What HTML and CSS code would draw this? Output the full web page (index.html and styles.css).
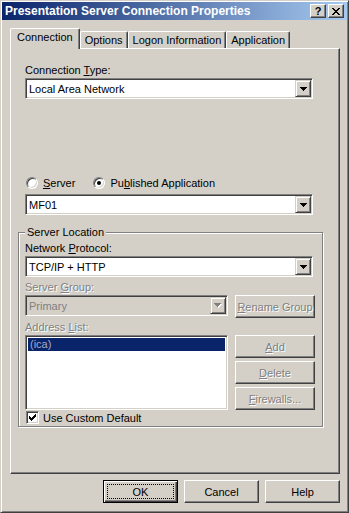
FILE: index.html
```html
<!DOCTYPE html>
<html lang="en">
<head>
    <meta charset="UTF-8">
    <meta name="viewport" content="width=device-width, initial-scale=1.0">
    <title>Presentation Server Connection Properties</title>
    <link rel="stylesheet" href="styles.css">
</head>
<body>
    <div class="window">
        <div class="titlebar">
            <span class="title">Presentation Server Connection Properties</span>
            <div class="caption-btns">
                <span class="cap-btn help">?</span>
                <span class="cap-btn">
                    <svg width="8" height="7" viewBox="0 0 8 7"><path d="M0 0h2v1H0zM6 0h2v1H6zM1 1h2v1H1zM5 1h2v1H5zM2 2h4v1H2zM3 3h2v1H3zM2 4h4v1H2zM1 5h2v1H1zM5 5h2v1H5zM0 6h2v1H0zM6 6h2v1H6z" fill="#000"/></svg>
                </span>
            </div>
        </div>

        <div class="dialog">
            <div class="tabs">
                <div class="tab active">Connection</div>
                <div class="tab">Options</div>
                <div class="tab">Logon Information</div>
                <div class="tab">Application</div>
            </div>

            <div class="panel">
                <div class="label first">Connection <u>T</u>ype:</div>
                <div class="combo wide">
                    <span class="combo-value">Local Area Network</span>
                    <span class="combo-btn"><svg width="7" height="4" viewBox="0 0 7 4"><path d="M0 0h7v1H0zM1 1h5v1H1zM2 2h3v1H2zM3 3h1v1H3z" fill="#000"/></svg></span>
                </div>

                <div class="radios">
                    <label class="radio-opt">
                        <span class="radio"></span>
                        <span><u>S</u>erver</span>
                    </label>
                    <label class="radio-opt">
                        <span class="radio"><span class="dot"></span></span>
                        <span>Pu<u>b</u>lished Application</span>
                    </label>
                </div>

                <div class="combo wide mf">
                    <span class="combo-value">MF01</span>
                    <span class="combo-btn"><svg width="7" height="4" viewBox="0 0 7 4"><path d="M0 0h7v1H0zM1 1h5v1H1zM2 2h3v1H2zM3 3h1v1H3z" fill="#000"/></svg></span>
                </div>

                <fieldset class="group">
                    <legend>Server Location</legend>

                    <div class="label">Network <u>P</u>rotocol:</div>
                    <div class="combo wide">
                        <span class="combo-value">TCP/IP + HTTP</span>
                        <span class="combo-btn"><svg width="7" height="4" viewBox="0 0 7 4"><path d="M0 0h7v1H0zM1 1h5v1H1zM2 2h3v1H2zM3 3h1v1H3z" fill="#000"/></svg></span>
                    </div>

                    <div class="label disabled gap-sm">Server <u>G</u>roup:</div>
                    <div class="row">
                        <div class="combo narrow off">
                            <span class="combo-value">Primary</span>
                            <span class="combo-btn"><svg width="8" height="5" viewBox="0 0 8 5"><path d="M1 1h7v1H1zM2 2h5v1H2zM3 3h3v1H3zM4 4h1v1H4z" fill="#fff"/><path d="M0 0h7v1H0zM1 1h5v1H1zM2 2h3v1H2zM3 3h1v1H3z" fill="#808080"/></svg></span>
                        </div>
                        <button class="btn disabled side"><span><u>R</u>ename Group</span></button>
                    </div>

                    <div class="label disabled gap-xs">Address <u>L</u>ist:</div>
                    <div class="row">
                        <div class="listbox">
                            <div class="list-item selected">(ica)</div>
                        </div>
                        <div class="side-btns">
                            <button class="btn disabled side"><span><u>A</u>dd</span></button>
                            <button class="btn disabled side"><span><u>D</u>elete</span></button>
                            <button class="btn disabled side"><span><u>F</u>irewalls...</span></button>
                        </div>
                    </div>

                    <label class="check-row">
                        <span class="checkbox">
                            <svg width="7" height="7" viewBox="0 0 7 7"><path d="M6 0h1v1H6zM5 1h2v1H5zM0 2h1v1H0zM4 2h3v1H4zM0 3h2v1H0zM3 3h3v1H3zM0 4h5v1H0zM1 5h3v1H1zM2 6h1v1H2z" fill="#000"/></svg>
                        </span>
                        <span>Use Custom Default</span>
                    </label>
                </fieldset>
            </div>

            <div class="footer">
                <button class="btn default"><span class="focus">OK</span></button>
                <button class="btn">Cancel</button>
                <button class="btn">Help</button>
            </div>
        </div>
    </div>
</body>
</html>
```

FILE: styles.css
```css
* {
    box-sizing: border-box;
}
body {
    margin: 0;
    font-family: 'Liberation Sans', Arial, sans-serif;
    font-size: 11px;
    color: #000;
    background-color: #d4d0c8;
}
u {
    text-decoration-thickness: 1px;
    text-underline-offset: 1px;
}

/* window frame */
.window {
    width: 349px;
    height: 513px;
    padding: 1px;
    background-color: #d4d0c8;
    border: 1px solid;
    border-color: #d4d0c8 #404040 #404040 #d4d0c8;
    box-shadow: inset 1px 1px #fff, inset -1px -1px #808080;
    display: flex;
    flex-direction: column;
}
.titlebar {
    height: 18px;
    display: flex;
    align-items: center;
    justify-content: space-between;
    padding: 0 3px 0 3px;
    background: linear-gradient(to right, #0a246a, #a6caf0);
    color: #fff;
    font-weight: bold;
}
.title {
    font-size: 12px;
}
.caption-btns {
    display: flex;
    gap: 2px;
}
.cap-btn {
    width: 16px;
    height: 14px;
    display: flex;
    align-items: center;
    justify-content: center;
    background-color: #d4d0c8;
    color: #000;
    border: 1px solid;
    border-color: #fff #404040 #404040 #fff;
    box-shadow: inset -1px -1px #808080;
    font-size: 11px;
}

.dialog {
    flex: 1;
    display: flex;
    flex-direction: column;
    padding: 8px 7px 0 8px;
}

/* tabs */
.tabs {
    display: flex;
    align-items: flex-end;
}
.tab {
    height: 17px;
    line-height: 16px;
    padding: 0 4px;
    border-top: 1px solid #fff;
    border-left: 1px solid #fff;
    border-right: 1px solid #404040;
    border-radius: 2px 2px 0 0;
    box-shadow: inset -1px 0 #808080;
    white-space: nowrap;
}
.tab.active {
    position: relative;
    z-index: 1;
    height: 21px;
    line-height: 16px;
    margin-bottom: -1px;
    padding: 0 6px;
    background-color: #d4d0c8;
}

/* tab page */
.panel {
    height: 426px;
    padding: 15px 0 0 14px;
    border: 1px solid;
    border-color: #fff #404040 #404040 #fff;
    box-shadow: inset -1px -1px #808080;
    display: flex;
    flex-direction: column;
    align-items: flex-start;
}
.label {
    height: 13px;
    line-height: 13px;
    margin-bottom: 1px;
    white-space: nowrap;
}
.label.disabled, .disabled {
    color: #808080;
    text-shadow: 1px 1px #fff;
}
.gap-sm {
    margin-top: 4px;
}
.gap-xs {
    margin-top: 3px;
}

.combo {
    height: 21px;
    padding: 1px;
    display: flex;
    align-items: center;
    background-color: #fff;
    border: 1px solid;
    border-color: #808080 #fff #fff #808080;
    box-shadow: inset 1px 1px #404040, inset -1px -1px #d4d0c8;
}
.combo.wide {
    width: 288px;
}
.combo.narrow {
    width: 203px;
}
.combo.off {
    background-color: #d4d0c8;
    color: #808080;
}
.combo-value {
    flex: 1;
    padding-left: 2px;
}
.combo-btn {
    width: 16px;
    height: 17px;
    display: flex;
    align-items: center;
    justify-content: center;
    background-color: #d4d0c8;
    border: 1px solid;
    border-color: #d4d0c8 #404040 #404040 #d4d0c8;
    box-shadow: inset 1px 1px #fff, inset -1px -1px #808080;
}

.radios {
    margin-top: 77px;
    margin-left: 1px;
    height: 13px;
    display: flex;
    align-items: center;
    gap: 18px;
}
.radio-opt {
    display: flex;
    align-items: center;
    gap: 5px;
}
.radio {
    width: 12px;
    height: 12px;
    display: flex;
    align-items: center;
    justify-content: center;
    border-radius: 50%;
    background-color: #fff;
    border: 1px solid;
    border-color: #808080 #fff #fff #808080;
    box-shadow: inset 1px 1px #404040, inset -1px -1px #d4d0c8;
}
.dot {
    width: 4px;
    height: 4px;
    border-radius: 50%;
    background-color: #000;
}
.combo.mf {
    margin-top: 5px;
}

/* server location group */
.group {
    margin: 10px 0 0 -7px;
    width: 305px;
    min-inline-size: 0;
    padding: 3px 6px 2px 6px;
    border: 1px solid #808080;
    box-shadow: inset 1px 1px #fff, 1px 1px #fff;
}
.group legend {
    padding: 0 2px;
    line-height: 14px;
    background-color: #d4d0c8;
}
.row {
    display: flex;
    gap: 7px;
}
.listbox {
    width: 203px;
    height: 75px;
    padding: 2px;
    background-color: #fff;
    border: 1px solid;
    border-color: #808080 #fff #fff #808080;
    box-shadow: inset 1px 1px #404040, inset -1px -1px #d4d0c8;
}
.list-item {
    height: 13px;
    line-height: 13px;
    padding-left: 2px;
}
.list-item.selected {
    background-color: #0a246a;
    color: #a9a9c8;
}
.side-btns {
    display: flex;
    flex-direction: column;
    gap: 3px;
}

.check-row {
    margin: 1px 0 0 1px;
    height: 13px;
    display: flex;
    align-items: center;
    gap: 4px;
}
.checkbox {
    width: 13px;
    height: 13px;
    display: flex;
    align-items: center;
    justify-content: center;
    background-color: #fff;
    border: 1px solid;
    border-color: #808080 #fff #fff #808080;
    box-shadow: inset 1px 1px #404040, inset -1px -1px #d4d0c8;
}

/* push buttons */
.btn {
    width: 75px;
    height: 23px;
    padding: 0;
    display: flex;
    align-items: center;
    justify-content: center;
    font: inherit;
    color: #000;
    background-color: #d4d0c8;
    border: 1px solid;
    border-color: #fff #404040 #404040 #fff;
    box-shadow: inset -1px -1px #808080;
}
.btn.side {
    width: 80px;
}
.btn.disabled {
    color: #808080;
    text-shadow: 1px 1px #fff;
}
.btn.default {
    border: 1px solid #000;
    box-shadow: inset 1px 1px #fff, inset -1px -1px #404040, inset -2px -2px #808080;
}
.focus {
    width: 67px;
    height: 15px;
    display: flex;
    align-items: center;
    justify-content: center;
    border: 1px dotted #000;
}

.footer {
    margin-top: 6px;
    display: flex;
    justify-content: flex-end;
    gap: 6px;
}
```
